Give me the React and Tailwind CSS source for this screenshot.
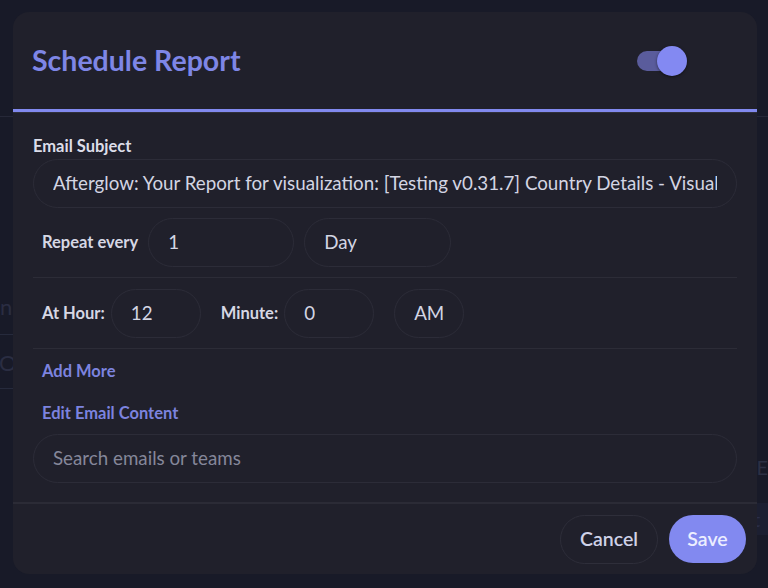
import React, { useState } from "react";

const font = { fontFamily: "Lato, 'Noto Sans', sans-serif" };

const Field = ({ value, placeholder, className = "" }) => (
  <div
    className={`flex h-[49px] items-center rounded-full border border-[#2c2c38] px-[19px] text-[18.75px] ${className}`}
  >
    <span
      className={`overflow-hidden whitespace-nowrap ${
        value ? "text-[#d3d5e3]" : "text-[#85879a]"
      }`}
    >
      {value || placeholder}
    </span>
  </div>
);

const App = () => {
  const [enabled, setEnabled] = useState(true);

  return (
    <div
      className="relative h-[588px] w-full overflow-hidden bg-[#181a28]"
      style={font}
    >
      {/* page behind the dialog */}
      <div className="absolute left-0 top-[116px] h-px w-full bg-[#262838]" />
      <div className="absolute left-0 top-[290px] text-[22px] text-[#2a2d42]">
        n
      </div>
      <div className="absolute left-[-20px] top-[334px] h-[55px] w-[36px] border border-[#262a3c] text-[22px] leading-[55px] text-[#2a2d42]">
        <span className="pl-[18px]">Or</span>
      </div>
      <div className="absolute right-0 top-[452px] text-[20px] text-[#2c3044]">
        E
      </div>
      <div className="absolute right-0 top-[503px] h-[32px] w-[20px] bg-[#1c1f31] pl-[5px] text-[20px] leading-[32px] text-[#2a2e48]">
        t
      </div>

      {/* dialog */}
      <div className="absolute left-[13px] top-[12px] flex h-[562px] w-[744px] flex-col overflow-hidden rounded-2xl bg-[#20202b]">
        <div className="flex h-[100px] shrink-0 items-center justify-between border-b-[3px] border-[#8189ee] pl-[19px] pr-[70px]">
          <h2 className="text-[28.5px] font-bold leading-none text-[#7e86e6]">
            Schedule Report
          </h2>
          <button
            onClick={() => setEnabled(!enabled)}
            className="relative flex h-[30px] w-[50px] items-center"
          >
            <span className="h-[20px] w-[42px] rounded-full bg-[#5a5c9c]" />
            <span className="absolute right-0 top-0 h-[30px] w-[30px] rounded-full bg-[#8389f2] shadow-[0_1px_3px_rgba(0,0,0,0.5)]" />
          </button>
        </div>
        <div className="h-px shrink-0 bg-[#30303b]" />

        <div className="flex flex-1 flex-col px-5 pt-[23px]">
          <label className="text-[16.5px] font-bold leading-[20px] text-[#dcdde9]">
            Email Subject
          </label>
          <Field
            className="mt-[3px] w-full"
            value="Afterglow: Your Report for visualization: [Testing v0.31.7] Country Details - Visualization"
          />

          <div className="mt-[10px] flex items-center gap-[10px] border-b border-[#2c2c37] pb-[10px] pl-[9px]">
            <span className="text-[16.5px] font-bold text-[#d6d7e4]">
              Repeat every
            </span>
            <Field className="w-[146px]" value="1" />
            <Field className="w-[147px]" value="Day" />
          </div>

          <div className="mt-[11px] flex items-center border-b border-[#2c2c37] pb-[10px] pl-[9px]">
            <span className="text-[16.5px] font-bold text-[#d6d7e4]">
              At Hour:
            </span>
            <Field className="ml-[6px] w-[90px]" value="12" />
            <span className="ml-5 text-[16.5px] font-bold text-[#d6d7e4]">
              Minute:
            </span>
            <Field className="ml-[6px] w-[90px]" value="0" />
            <Field className="ml-5 w-[70px]" value="AM" />
          </div>

          <button className="mt-[12px] self-start pl-[9px] text-[16.5px] font-bold leading-[20px] text-[#7c83df]">
            Add More
          </button>
          <button className="mt-[22px] self-start pl-[9px] text-[16.5px] font-bold leading-[20px] text-[#7c83df]">
            Edit Email Content
          </button>
          <Field className="mt-[11px] w-full" placeholder="Search emails or teams" />
        </div>

        <div className="flex h-[72px] shrink-0 items-center justify-end gap-[11px] border-t-2 border-[#2b2b36] pr-[11px]">
          <button className="h-[49px] w-[98px] rounded-full border border-[#2e2e3a] text-[19.5px] font-semibold text-[#cfd2e8]">
            Cancel
          </button>
          <button className="h-[48px] w-[77px] rounded-full bg-[#8289f0] text-[19.5px] font-semibold text-[#eceeff]">
            Save
          </button>
        </div>
      </div>
    </div>
  );
};

export default App;
